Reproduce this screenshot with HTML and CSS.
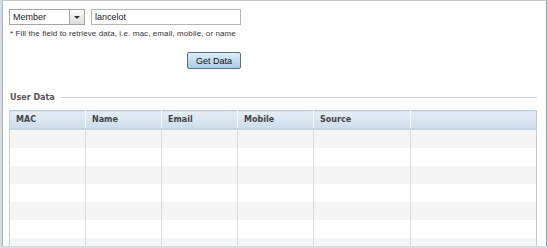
FILE: index.html
```html
<!DOCTYPE html>
<html lang="en">
    <head>
        <meta charset="UTF-8" />
        <link rel="stylesheet" href="styles.css">
        <title>User Data</title>
    </head>
    <body>
        <section class="panel">
            <div class="search">
                <div class="fields">
                    <div class="select">
                        <span class="select-value">Member</span>
                        <span class="select-arrow"></span>
                    </div>
                    <div class="text-input">lancelot</div>
                </div>
                <p class="hint">* Fill the field to retrieve data, i.e. mac, email, mobile, or name</p>
                <div class="actions">
                    <button class="get-data">Get Data</button>
                </div>
            </div>

            <fieldset class="user-data">
                <legend>User Data</legend>
                <table class="grid">
                    <thead>
                        <tr>
                            <th class="col-mac">MAC</th>
                            <th class="col-name">Name</th>
                            <th class="col-email">Email</th>
                            <th class="col-mobile">Mobile</th>
                            <th class="col-source">Source</th>
                            <th></th>
                        </tr>
                    </thead>
                    <tbody>
                        <tr><td></td><td></td><td></td><td></td><td></td><td></td></tr>
                        <tr><td></td><td></td><td></td><td></td><td></td><td></td></tr>
                        <tr><td></td><td></td><td></td><td></td><td></td><td></td></tr>
                        <tr><td></td><td></td><td></td><td></td><td></td><td></td></tr>
                        <tr><td></td><td></td><td></td><td></td><td></td><td></td></tr>
                        <tr><td></td><td></td><td></td><td></td><td></td><td></td></tr>
                        <tr><td></td><td></td><td></td><td></td><td></td><td></td></tr>
                    </tbody>
                </table>
            </fieldset>
        </section>
    </body>
</html>
```
FILE: styles.css
```css
html,
body {
    margin: 0;
    height: 100%;
    overflow: hidden;
}
body {
    background-color: #d3dde8;
    font-family: "Liberation Sans", Arial, sans-serif;
    font-size: 9px;
    color: #222;
}
.panel {
    height: 246px;
    margin: 0 1px 0 2px;
    background-color: white;
    border-top: 1px solid #c8c8c8;
    border-left: 1px solid #b4b4b4;
    border-right: 1px solid #9a9a9a;
    box-sizing: border-box;
    padding: 8px 8px 0 6px;
    overflow: hidden;
}

.fields {
    display: flex;
    gap: 6px;
}
.select {
    display: flex;
    width: 76px;
    height: 16px;
    box-sizing: border-box;
    border: 1px solid #a5a5a5;
    background: white;
}
.select-value {
    flex: 1;
    padding: 2px 0 0 3px;
}
.select-arrow {
    width: 14px;
    border-left: 1px solid #a5a5a5;
    background: linear-gradient(#fbfbfb, #dedede);
    position: relative;
}
.select-arrow:after {
    content: "";
    position: absolute;
    left: 4px;
    top: 6px;
    border-left: 3px solid transparent;
    border-right: 3px solid transparent;
    border-top: 3px solid #333;
}
.text-input {
    width: 150px;
    height: 16px;
    box-sizing: border-box;
    border: 1px solid #b5b5b5;
    padding: 2px 0 0 3px;
}
.hint {
    margin: 4px 0 0 1px;
    font-size: 8px;
    letter-spacing: 0.1px;
    color: #333;
}
.actions {
    width: 232px;
    display: flex;
    justify-content: flex-end;
    margin-top: 14px;
}
.get-data {
    width: 54px;
    height: 17px;
    padding: 0;
    font-family: inherit;
    font-size: 9px;
    color: #111;
    border: 1px solid #5a6f82;
    border-radius: 2px;
    background: linear-gradient(#dbeefb, #a9cde6);
}

.user-data {
    margin: 24px 0 0 0;
    padding: 8px 0 0 0;
    border: none;
    border-top: 1px solid #cfd6dc;
    width: 528px;
}
.user-data legend {
    padding: 0 6px 0 1px;
    margin-left: 0;
    font-family: "DejaVu Sans", Verdana, sans-serif;
    font-weight: bold;
    font-size: 8px;
    color: #555;
}
.grid {
    width: 528px;
    border-collapse: collapse;
    table-layout: fixed;
    border-left: 1px solid #c3ccd5;
    border-right: 1px solid #c3ccd5;
}
.grid th {
    height: 18px;
    box-sizing: border-box;
    padding: 0 0 0 6px;
    text-align: left;
    font-family: "DejaVu Sans", Verdana, sans-serif;
    font-weight: bold;
    font-size: 8px;
    color: #444;
    background: linear-gradient(#e6eef7, #cddcec);
    border-top: 1px solid #bccbd9;
    border-bottom: 2px solid #c9d5e0;
    border-right: 1px solid #f3f7fb;
}
.grid th:last-child {
    border-right: none;
}
.col-mac,
.col-name,
.col-email,
.col-mobile {
    width: 76px;
}
.col-source {
    width: 97px;
}
.grid td {
    height: 18px;
    padding: 0;
    border-right: 1px solid #dcdcdc;
}
.grid td:last-child {
    border-right: none;
}
.grid tbody tr:nth-child(odd) {
    background-color: #f5f5f5;
}
```
